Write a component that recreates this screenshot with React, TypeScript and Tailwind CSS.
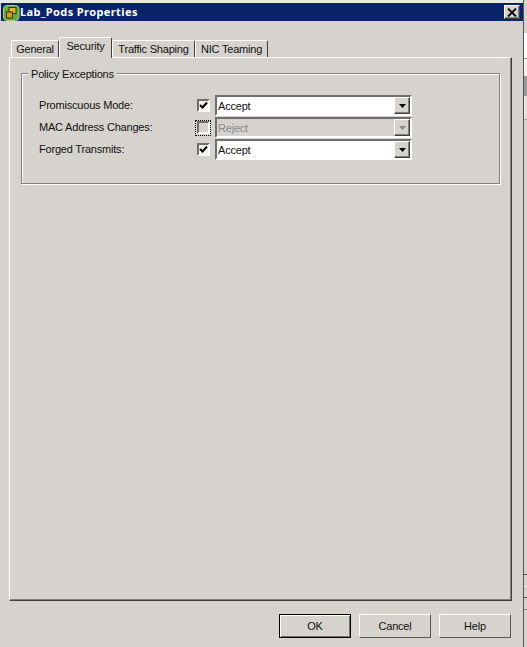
const font = "font-['Liberation_Sans',sans-serif]";

const bevel = "border border-t-white border-l-white border-r-[#404040] border-b-[#404040] shadow-[inset_-1px_-1px_0_#808080]";
const sunken = "border-2 border-t-[#6e6e6e] border-l-[#6e6e6e] border-r-white border-b-white";

const rows = [
  { label: "Promiscuous Mode:", checked: true, value: "Accept", enabled: true },
  { label: "MAC Address Changes:", checked: false, value: "Reject", enabled: false },
  { label: "Forged Transmits:", checked: true, value: "Accept", enabled: true },
];

const Tab = ({ label, width, active }: { label: string; width: string; active?: boolean }) => (
  <div
    className={`${width} flex items-center justify-center border-l border-t border-r border-t-white border-l-white border-r-[#404040] rounded-t-[2px] ${
      active ? "h-[21px] -mb-px pb-[3px] relative z-10 bg-[#d6d3ce]" : "h-[17px]"
    }`}
  >
    {label}
  </div>
);

const Check = ({ checked, focused }: { checked: boolean; focused: boolean }) => (
  <div className={`w-[16px] h-[16px] flex items-center justify-center ${focused ? "border border-dotted border-black" : ""}`}>
    <div className={`w-[13px] h-[13px] flex items-center justify-center ${sunken} ${checked ? "bg-[#f4f3f0]" : ""}`}>
      {checked && (
        <svg width="9" height="9" viewBox="0 0 9 9">
          <path d="M1 4 L3.5 6.5 L8 1.5" fill="none" stroke="#000" strokeWidth="2" />
        </svg>
      )}
    </div>
  </div>
);

const Combo = ({ value, enabled }: { value: string; enabled: boolean }) => (
  <div className={`w-[197px] h-[21px] flex items-center justify-between ${sunken} ${enabled ? "bg-white" : "bg-[#d6d3ce] text-[#8a8a8a]"}`}>
    <span className="pl-[1px] pt-[1px]">{value}</span>
    <div className={`w-[16px] h-[17px] bg-[#d6d3ce] flex items-center justify-center ${bevel}`}>
      <svg width="7" height="4" viewBox="0 0 7 4">
        <path d="M0 0 H7 L3.5 4 Z" fill={enabled ? "#000" : "#8a8a8a"} />
      </svg>
    </div>
  </div>
);

const Btn = ({ label, isDefault }: { label: string; isDefault?: boolean }) => (
  <div
    className={`w-[72px] h-[24px] pt-[1px] flex items-center justify-center ${
      isDefault
        ? "border border-black shadow-[inset_1px_1px_0_#fff,inset_-1px_-1px_0_#6e6e6e]"
        : "border border-t-white border-l-white border-r-[#555] border-b-[#555]"
    }`}
  >
    {label}
  </div>
);

export default function App() {
  return (
    <div className={`w-[527px] h-[647px] overflow-hidden flex bg-[#d6d3ce] text-[11px] tracking-[-0.2px] leading-none text-[#111] ${font}`}>
      <div className="w-[523px] flex flex-col">
        {/* Title bar */}
        <div className="h-[3px] bg-[#e8e6e2]" />
        <div className="h-[18px] ml-px flex items-center justify-between bg-[#0a246a] pl-[2px] pr-[3px]">
          <div className="flex items-center text-white font-bold font-['Noto_Sans',sans-serif] tracking-[0.4px] pb-[2px]">
            <svg width="17" height="17" viewBox="0 0 17 17" className="mt-[2px]">
              <rect x="0.5" y="1.5" width="15.5" height="15" rx="3.5" fill="#6aa83a" stroke="#a3d070" />
              <rect x="6" y="3.5" width="7" height="6" fill="#e6b830" stroke="#2f3a18" />
              <rect x="3.5" y="8" width="6" height="6" fill="#d8a020" stroke="#2f3a18" />
            </svg>
            <span>Lab_Pods Properties</span>
          </div>
          <div className={`w-[16px] h-[14px] bg-[#d6d3ce] flex items-center justify-center ${bevel}`}>
            <svg width="10" height="9" viewBox="0 0 10 9">
              <path d="M1 0.5 L9 8.5 M9 0.5 L1 8.5" stroke="#000" strokeWidth="1.8" />
            </svg>
          </div>
        </div>

        {/* Tabs */}
        <div className="mt-[16px] mx-[11px] h-[20px] flex items-end">
          <Tab label="General" width="w-[48px]" />
          <Tab label="Security" width="w-[53px]" active />
          <Tab label="Traffic Shaping" width="w-[83px]" />
          <Tab label="NIC Teaming" width="w-[73px]" />
        </div>

        {/* Tab panel */}
        <div className="mx-[9px] w-[503px] h-[544px] border border-t-white border-l-white border-r-[#404040] border-b-[#404040] shadow-[inset_-1px_-1px_0_#808080] pt-[15px] px-[11px]">
          <div className="relative w-[479px] h-[111px] border border-[#808080] shadow-[inset_1px_1px_0_#fff,1px_1px_0_#fff] pt-[21px]">
            <span className="absolute left-[6px] -top-[6px] bg-[#d6d3ce] px-[3px] leading-[12px]">Policy Exceptions</span>
            <div className="flex flex-col gap-[1px] pl-[17px]">
              {rows.map((r) => (
                <div key={r.label} className="flex items-center h-[21px]">
                  <span className="w-[156px]">{r.label}</span>
                  <Check checked={r.checked} focused={!r.enabled} />
                  <div className="ml-[4px]">
                    <Combo value={r.value} enabled={r.enabled} />
                  </div>
                </div>
              ))}
            </div>
          </div>
        </div>

        {/* Buttons */}
        <div className="mt-[13px] flex justify-end gap-[8px] pr-[12px]">
          <Btn label="OK" isDefault />
          <Btn label="Cancel" />
          <Btn label="Help" />
        </div>
      </div>

      {/* Window behind */}
      <div className="w-[4px] flex flex-col border-l border-[#555]">
        <div className="h-[33px]" />
        <div className="h-[26px] bg-white border-b border-[#999]" />
        <div className="h-[17px] bg-[#f2f1ee]" />
        <div className="h-[20px] bg-[#999]" />
        <div className="h-[24px] bg-[#e4e2dd] border-b border-[#aaa]" />
        <div className="h-[454px]" />
        <div className="h-[12px] border-t border-[#555]" />
        <div className="h-[11px] border-t border-[#eee]" />
        <div className="h-[12px] border-t border-[#555]" />
        <div className="flex-1 border-t border-[#888]" />
      </div>
    </div>
  );
}
